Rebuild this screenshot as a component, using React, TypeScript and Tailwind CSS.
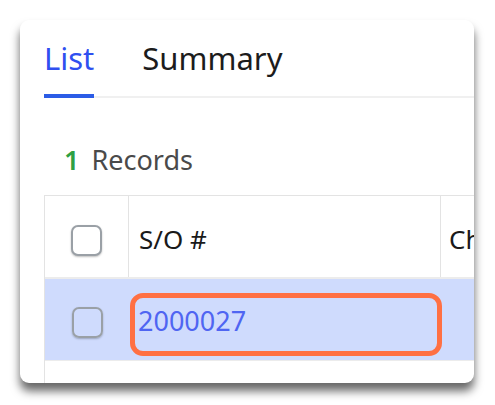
import React from "react";

function Box({ clear }: { clear?: boolean }) {
  return (
    <div
      className={
        "w-[31px] h-[31px] rounded-[7px] border-2 border-[#9aa0a6] shadow-[0_1px_2px_rgba(0,0,0,0.25)] " +
        (clear ? "bg-transparent" : "bg-white")
      }
    />
  );
}

export default function App() {
  return (
    <div className="w-[495px] h-[405px] bg-white pt-[20px] pl-[20px] overflow-hidden" style={{ fontFamily: '"Noto Sans", "Open Sans", sans-serif' }}>
      <div className="relative w-[454px] h-[363px] bg-white rounded-[9px] overflow-hidden shadow-[0_8px_10px_rgba(0,0,0,0.6)]">
        <div className="pl-[24px] pt-[18px]">
          <div className="flex border-b-2 border-[#f0f0f0] w-[520px]">
            <div className="relative text-[31px] leading-[40px] text-[#2f4ff0] pb-[18px]">
              List
              <div className="absolute left-0 right-[0px] bottom-[-2px] h-[4px] bg-[#2b5ce6]" />
            </div>
            <div className="text-[31px] leading-[40px] text-[#1c1c1c] ml-[48px]">Summary</div>
          </div>
          <div className="pl-[20px] pt-[44px] h-[97px] text-[27px] leading-[36px] text-[#4a4a4a]">
            <span className="text-[#2ea043] font-semibold mr-[12px]">1</span>Records
          </div>
          <div className="w-[520px] border-l border-t border-[#e3e3e3]">
            <div className="flex h-[83px] border-b-2 border-[#ececec]">
              <div className="w-[84px] flex items-center justify-center pt-[7px] border-r border-[#e3e3e3]">
                <Box />
              </div>
              <div className="w-[312px] flex items-center pl-[10px] pt-[6px] text-[26px] text-[#1a1a1a] border-r border-[#e3e3e3]">
                S/O #
              </div>
              <div className="flex items-center pl-[8px] pt-[6px] text-[26px] text-[#1a1a1a]">Ch</div>
            </div>
            <div className="relative flex h-[82px] bg-[#cfdbfd] border-b border-[#ececec]">
              <div className="w-[84px] flex items-center justify-center pt-[6px]">
                <Box clear />
              </div>
              <div className="flex items-center pl-[9px] pt-[3px] text-[27px] text-[#4f65f2]">2000027</div>
              <div className="absolute left-[85px] top-[14px] w-[312px] h-[63px] rounded-[13px] border-[5px] border-[#ff7043]" />
            </div>
            <div className="h-[40px]" />
          </div>
        </div>
      </div>
    </div>
  );
}
